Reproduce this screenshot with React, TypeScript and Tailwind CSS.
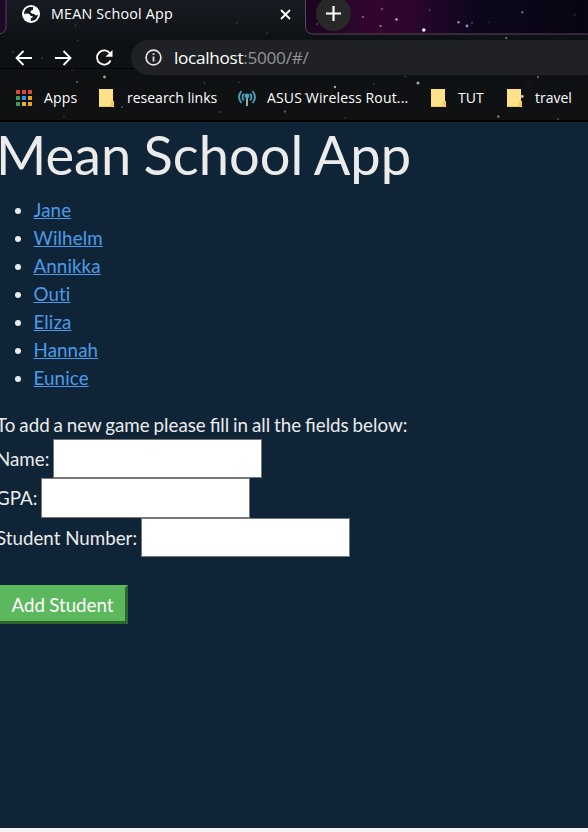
import React from "react";

const students = ["Jane", "Wilhelm", "Annikka", "Outi", "Eliza", "Hannah", "Eunice"];

const appColors = ["#d9473f", "#d9473f", "#d9473f", "#3a9e58", "#2d8ff0", "#e8a626", "#3a9e58", "#e8b626", "#e8a626"];

const stars: [number, number, number, string][] = [
  [75.5, 25.5, 0.9, "#3d444c"], [93.5, 6, 0.7, "#343b43"], [77.5, 40.5, 0.8, "#3d4145"], [13, 52, 0.9, "#454545"],
  [42, 58, 1.1, "#333638"], [72, 70, 0.8, "#3a3a3a"], [77, 82, 1.1, "#62625f"], [104.5, 77, 1.4, "#aaa58e"],
  [122, 107, 1.1, "#45484c"], [64, 117, 0.9, "#33373b"], [237, 23, 0.9, "#303438"], [267, 33, 0.9, "#333639"],
  [204.5, 83, 0.9, "#45484c"], [239, 82.5, 0.9, "#33373b"], [335, 87, 1.2, "#aaaaaf"], [305.5, 94, 1, "#77797a"],
  [285, 111.5, 1.2, "#55585b"], [220, 112, 0.9, "#404347"], [345, 118, 0.8, "#404347"], [374, 84, 0.8, "#404347"],
  [363, 17, 1.1, "#98608f"], [382, 9, 1.2, "#6d4572"], [380.5, 26, 1.1, "#bd79b1"], [317, 24, 1, "#653673"],
  [396.5, 19.5, 1.3, "#c5a0cb"], [429.5, 10, 1, "#604270"], [423.8, 30, 1.8, "#f2e9ff"], [458.5, 22.2, 1.2, "#a18bae"],
  [467, 26, 1.4, "#9b89db"], [472, 23, 1, "#554662"], [489, 22.5, 0.8, "#373047"], [522.3, 12.2, 1.2, "#70647a"],
  [574.5, 15, 0.9, "#30303d"], [506.2, 38, 1.2, "#626469"], [418, 83, 1.6, "#99a5ad"], [405.5, 76.5, 0.9, "#45484c"],
  [538, 77, 1.2, "#55585b"], [528, 83, 0.8, "#33373b"], [498.3, 116.5, 1.3, "#75787b"], [558, 119, 0.9, "#55585b"],
];

function Folder({ star = false }: { star?: boolean }) {
  return (
    <svg width="18" height="18" viewBox="0 0 18 18" className="shrink-0">
      <path d="M1 0h14v12h1v6H1z" fill="#ffe18a" />
      <path d="M13 12.5h3V17h-3z" fill="#f2c94f" />
      <path d="M1 17h13v1H1z" fill="#edc75e" />
      {star && <circle cx="16.200" cy="7.500" r="1.400" fill="#d6cfae" />}
    </svg>
  );
}

function Browser() {
  return (
    <header className="relative h-[122px] w-full overflow-hidden border-b-2 border-black bg-linear-to-b from-[#171b23] via-[#0e1113] via-35% to-[#0f1113] font-['Open_Sans',sans-serif] text-white">
      <svg className="absolute inset-0" width="588" height="120" viewBox="0 0 588 120">
        <defs>
          <linearGradient id="sky" x1="305" x2="588" y1="0" y2="0" gradientUnits="userSpaceOnUse">
            <stop offset="0" stopColor="#19051f" />
            <stop offset=".23" stopColor="#32052f" />
            <stop offset=".34" stopColor="#30062d" />
            <stop offset=".45" stopColor="#200627" />
            <stop offset=".62" stopColor="#0c061b" />
            <stop offset="1" stopColor="#080512" />
          </linearGradient>
        </defs>
        <path d="M305.5 -1V26q0 8 8 8H590V-1z" fill="url(#sky)" stroke="#58475d" />
        <path d="M-1 34q7-1 7-8V-1H-1z" fill="#1d0828" stroke="#514657" />
        <path d="M0 68.5H588" stroke="#020303" />
        {stars.map(([x, y, r, c], i) => <circle key={i} cx={x} cy={y} r={r} fill={c} />)}
      </svg>
      <div className="relative flex h-[34px] items-start">
        <svg className="mt-[5px] ml-[22px] shrink-0" width="18" height="18" viewBox="0 0 18 18">
          <circle cx="9" cy="9" r="9" fill="white" />
          <path d="M7.4 2.1C4 3 2 5.7 2 9l1.8.2 2.8-.1q1.800.1 1.800 2h2.200v1.500l-1.800.3v3.200q6.700-.4 7.200-6.500l-2.200 1-1.500-1.700-2-.2-1.700-1.200V6.100l2.400-1.400V2.100z" fill="#171c24" />
          <path d="M3 8.400l4 .3-.5 3.400-1.100.5z" fill="white" />
        </svg>
        <span className="ml-[11px] w-[229px] whitespace-nowrap pt-px text-[14.3px] leading-[26px] tracking-[0.2px]">MEAN School App</span>
        <svg className="mt-[9px]" width="11" height="11" viewBox="0 0 11 11"><path d="M1 1l9 9M10 1l-9 9" stroke="white" strokeWidth="1.8" /></svg>
        <div className="ml-[25px] mt-[-4px] flex h-[35px] w-[35px] items-center justify-center rounded-full bg-[#282828]">
          <svg width="15" height="15" viewBox="0 0 15 15"><path d="M7.5 0v15M0 7.5h15" stroke="white" strokeWidth="2.2" /></svg>
        </div>
      </div>
      <div className="relative mt-[6px] flex h-[35px] items-center">
        <svg className="ml-[15px] shrink-0" width="98" height="20" viewBox="0 0 98 20" fill="none" stroke="white" strokeWidth="1.8">
          <path d="M17 10H1.5M8.5 3l-7 7 7 7M40 10h15.500M48.500 3l7 7-7 7" />
          <path d="M95 5.500A7.100 7.100 0 1 0 95.600 12.500" />
          <path d="M97.500 2v6.800h-7z" fill="white" stroke="none" />
        </svg>
        <div className="ml-[18px] flex h-full flex-1 items-center rounded-l-full bg-[#202124]">
          <svg className="ml-[14px] shrink-0" width="17" height="17" viewBox="0 0 17 17" fill="none" stroke="#e5e5e5" strokeWidth="1.7">
            <circle cx="8.500" cy="8.500" r="7.400" /><path d="M8.500 7.500v5M8.500 4.200v1.800" />
          </svg>
          <span className="ml-[12px] whitespace-nowrap text-[17.2px] leading-[34px] tracking-[-0.3px]">localhost<span className="text-[#919396]">:5000/#/</span></span>
        </div>
      </div>
      <nav className="relative flex h-[45px] items-center whitespace-nowrap text-[14px]">
        <div className="ml-[16px] grid w-[16px] shrink-0 grid-cols-3 gap-[2px]">
          {appColors.map((c, i) => <i key={i} className="h-[4px] w-[4px]" style={{ backgroundColor: c }} />)}
        </div>
        <span className="ml-[12px] w-[54px] tracking-[0.15px]">Apps</span>
        <Folder />
        <span className="ml-[11px] w-[111px]">research links</span>
        <svg width="18" height="18" viewBox="0 0 18 18" fill="none" stroke="#4b9fbd" strokeWidth="1.900" className="shrink-0">
          <path d="M3.500 14q-5-6 0-12M6 11.500q-3-3.500 0-7M12 11.500q3-3.500 0-7M14.500 14q5-6 0-12" />
          <path d="M9 8v9" stroke="#a7bdc5" strokeWidth="1.800" /><circle cx="9" cy="7" r="1.500" fill="#77bad2" />
        </svg>
        <span className="ml-[11px] w-[163px] tracking-[0.15px]">ASUS Wireless Rout...</span>
        <Folder />
        <span className="ml-[10px] w-[48px]">TUT</span>
        <Folder star />
        <span className="ml-[11px]">travel</span>
      </nav>
    </header>
  );
}

function Field({ label, name, labelClass, inputClass }: { label: string; name: string; labelClass: string; inputClass: string }) {
  return (
    <div className="flex items-center whitespace-nowrap">
      <label htmlFor={name} className={labelClass}>{label}</label>
      <input id={name} className={`${inputClass} w-[209px] border border-[#767676] bg-white px-1 text-black outline-none`} />
    </div>
  );
}

export default function App() {
  return (
    <div className="flex h-[832px] w-[588px] flex-col overflow-hidden bg-[#0f2537]">
      <Browser />
      <main className="flex-1 font-['Lato',sans-serif] text-[18.75px] leading-[28px] text-[#ebebeb]">
        <h1 className="-ml-[4px] whitespace-nowrap text-[54.2px] leading-[66px] [word-spacing:-1.5px]">Mean School App</h1>
        <ul className="ml-[33.5px] mt-[8px] list-disc">
          {students.map((name) => <li key={name}><a href="#" className="tracking-[0.1px] text-[#4c9be8] underline [font-variant-ligatures:none]">{name}</a></li>)}
        </ul>
        <form className="-ml-[4px] mt-[19px]">
          <p className="whitespace-nowrap [word-spacing:-0.9px]">To add a new game please fill in all the fields below:</p>
          <Field label="Name:" name="name" labelClass="w-[57px]" inputClass="h-[39px]" />
          <Field label="GPA:" name="gpa" labelClass="w-[45px]" inputClass="h-[40px]" />
          <Field label="Student Number:" name="number" labelClass="w-[145px]" inputClass="h-[39px]" />
          <button type="button" className="mt-[28px] h-[39px] w-[132px] border-[3px] border-t-[#5cb85c] border-r-[#2d672d] border-b-[#2d672d] border-l-[#5cb85c] bg-[#5cb85c] pl-px text-white [word-spacing:-0.5px]">Add Student</button>
        </form>
      </main>
      <footer className="h-[4px] bg-[#f5f3f5]" />
    </div>
  );
}
